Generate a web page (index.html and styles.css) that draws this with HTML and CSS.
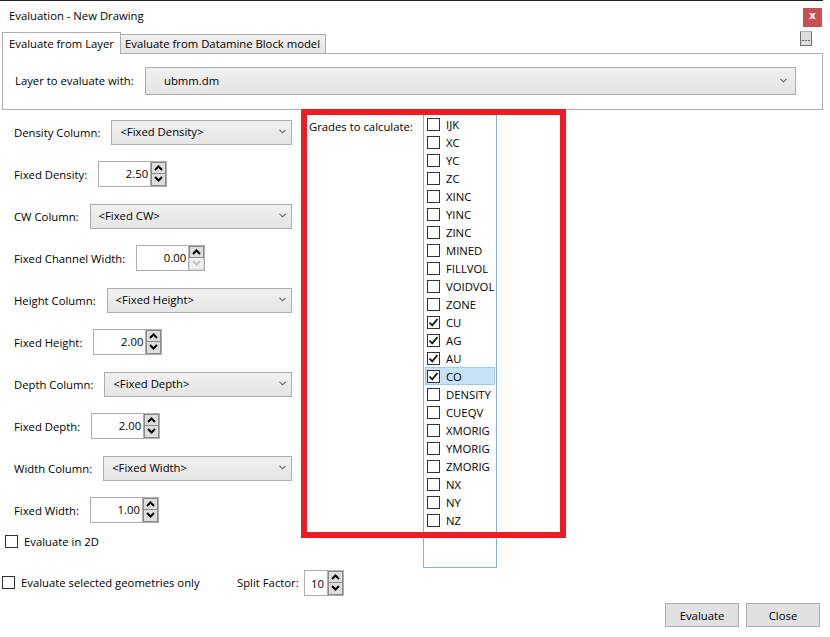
FILE: index.html
```html
<!DOCTYPE html>
<html>
<head>
<meta charset="utf-8">
<link rel="stylesheet" href="styles.css">
</head>
<body>
<div class="window">
  <div class="titlebar">
    <span class="title">Evaluation - New Drawing</span>
    <button class="close-x">x</button>
  </div>
  <div class="tabs-row">
    <div class="tab active">Evaluate from Layer</div>
    <div class="tab">Evaluate from Datamine Block model</div>
    <button class="more"><svg width="8" height="3" viewBox="0 0 8 3"><rect x="0" y="1" width="2" height="1" fill="#7a4a8a"/><rect x="3" y="1" width="2" height="1" fill="#3a6aa0"/><rect x="6" y="1" width="2" height="1" fill="#8a5a3a"/></svg></button>
  </div>
  <div class="tabpanel">
    <span class="panel-label">Layer to evaluate with:</span>
    <div class="combo combo-wide"><span class="combo-text">ubmm.dm</span><svg class="chev" width="7" height="5" viewBox="0 0 7 5"><polyline points="0.5,0.8 3.5,3.8 6.5,0.8" fill="none" stroke="#606060" stroke-width="1.1"/></svg></div>
  </div>
  <div class="main">
    <div class="left">
      <div class="row"><span class="lbl">Density Column:</span><div class="combo"><span class="combo-text">&lt;Fixed Density&gt;</span><svg class="chev" width="7" height="5" viewBox="0 0 7 5"><polyline points="0.5,0.8 3.5,3.8 6.5,0.8" fill="none" stroke="#606060" stroke-width="1.1"/></svg></div></div>
      <div class="row"><span class="lbl">Fixed Density:</span><div class="spin"><div class="spin-field">2.50</div><div class="spin-btns"><span class="spin-btn"><svg width="9" height="6" viewBox="0 0 9 6"><polyline points="1,5 4.5,1.5 8,5" fill="none" stroke="#000" stroke-width="2"/></svg></span><span class="spin-btn"><svg width="9" height="6" viewBox="0 0 9 6"><polyline points="1,1 4.5,4.5 8,1" fill="none" stroke="#000" stroke-width="2"/></svg></span></div></div></div>
      <div class="row"><span class="lbl">CW Column:</span><div class="combo"><span class="combo-text">&lt;Fixed CW&gt;</span><svg class="chev" width="7" height="5" viewBox="0 0 7 5"><polyline points="0.5,0.8 3.5,3.8 6.5,0.8" fill="none" stroke="#606060" stroke-width="1.1"/></svg></div></div>
      <div class="row"><span class="lbl">Fixed Channel Width:</span><div class="spin"><div class="spin-field">0.00</div><div class="spin-btns"><span class="spin-btn"><svg width="9" height="6" viewBox="0 0 9 6"><polyline points="1,5 4.5,1.5 8,5" fill="none" stroke="#000" stroke-width="2"/></svg></span><span class="spin-btn disabled"><svg width="9" height="6" viewBox="0 0 9 6"><polyline points="1,1 4.5,4.5 8,1" fill="none" stroke="#c4c4c4" stroke-width="2"/></svg></span></div></div></div>
      <div class="row"><span class="lbl">Height Column:</span><div class="combo"><span class="combo-text">&lt;Fixed Height&gt;</span><svg class="chev" width="7" height="5" viewBox="0 0 7 5"><polyline points="0.5,0.8 3.5,3.8 6.5,0.8" fill="none" stroke="#606060" stroke-width="1.1"/></svg></div></div>
      <div class="row"><span class="lbl">Fixed Height:</span><div class="spin"><div class="spin-field">2.00</div><div class="spin-btns"><span class="spin-btn"><svg width="9" height="6" viewBox="0 0 9 6"><polyline points="1,5 4.5,1.5 8,5" fill="none" stroke="#000" stroke-width="2"/></svg></span><span class="spin-btn"><svg width="9" height="6" viewBox="0 0 9 6"><polyline points="1,1 4.5,4.5 8,1" fill="none" stroke="#000" stroke-width="2"/></svg></span></div></div></div>
      <div class="row"><span class="lbl">Depth Column:</span><div class="combo"><span class="combo-text">&lt;Fixed Depth&gt;</span><svg class="chev" width="7" height="5" viewBox="0 0 7 5"><polyline points="0.5,0.8 3.5,3.8 6.5,0.8" fill="none" stroke="#606060" stroke-width="1.1"/></svg></div></div>
      <div class="row"><span class="lbl">Fixed Depth:</span><div class="spin"><div class="spin-field">2.00</div><div class="spin-btns"><span class="spin-btn"><svg width="9" height="6" viewBox="0 0 9 6"><polyline points="1,5 4.5,1.5 8,5" fill="none" stroke="#000" stroke-width="2"/></svg></span><span class="spin-btn"><svg width="9" height="6" viewBox="0 0 9 6"><polyline points="1,1 4.5,4.5 8,1" fill="none" stroke="#000" stroke-width="2"/></svg></span></div></div></div>
      <div class="row"><span class="lbl">Width Column:</span><div class="combo"><span class="combo-text">&lt;Fixed Width&gt;</span><svg class="chev" width="7" height="5" viewBox="0 0 7 5"><polyline points="0.5,0.8 3.5,3.8 6.5,0.8" fill="none" stroke="#606060" stroke-width="1.1"/></svg></div></div>
      <div class="row"><span class="lbl">Fixed Width:</span><div class="spin"><div class="spin-field">1.00</div><div class="spin-btns"><span class="spin-btn"><svg width="9" height="6" viewBox="0 0 9 6"><polyline points="1,5 4.5,1.5 8,5" fill="none" stroke="#000" stroke-width="2"/></svg></span><span class="spin-btn"><svg width="9" height="6" viewBox="0 0 9 6"><polyline points="1,1 4.5,4.5 8,1" fill="none" stroke="#000" stroke-width="2"/></svg></span></div></div></div>
      <div class="check-row eval2d"><span class="cb"></span><span>Evaluate in 2D</span></div>
    </div>
    <div class="grades">
      <span class="grades-label">Grades to calculate:</span>
      <div class="listbox">
        <div class="item"><span class="cb"></span><span>IJK</span></div>
        <div class="item"><span class="cb"></span><span>XC</span></div>
        <div class="item"><span class="cb"></span><span>YC</span></div>
        <div class="item"><span class="cb"></span><span>ZC</span></div>
        <div class="item"><span class="cb"></span><span>XINC</span></div>
        <div class="item"><span class="cb"></span><span>YINC</span></div>
        <div class="item"><span class="cb"></span><span>ZINC</span></div>
        <div class="item"><span class="cb"></span><span>MINED</span></div>
        <div class="item"><span class="cb"></span><span>FILLVOL</span></div>
        <div class="item"><span class="cb"></span><span>VOIDVOL</span></div>
        <div class="item"><span class="cb"></span><span>ZONE</span></div>
        <div class="item"><span class="cb"><svg width="11" height="11" viewBox="0 0 11 11"><polyline points="1.5,5.5 4.2,8.3 9.5,2" fill="none" stroke="#111" stroke-width="1.8"/></svg></span><span>CU</span></div>
        <div class="item"><span class="cb"><svg width="11" height="11" viewBox="0 0 11 11"><polyline points="1.5,5.5 4.2,8.3 9.5,2" fill="none" stroke="#111" stroke-width="1.8"/></svg></span><span>AG</span></div>
        <div class="item"><span class="cb"><svg width="11" height="11" viewBox="0 0 11 11"><polyline points="1.5,5.5 4.2,8.3 9.5,2" fill="none" stroke="#111" stroke-width="1.8"/></svg></span><span>AU</span></div>
        <div class="item selected"><span class="cb"><svg width="11" height="11" viewBox="0 0 11 11"><polyline points="1.5,5.5 4.2,8.3 9.5,2" fill="none" stroke="#111" stroke-width="1.8"/></svg></span><span>CO</span></div>
        <div class="item"><span class="cb"></span><span>DENSITY</span></div>
        <div class="item"><span class="cb"></span><span>CUEQV</span></div>
        <div class="item"><span class="cb"></span><span>XMORIG</span></div>
        <div class="item"><span class="cb"></span><span>YMORIG</span></div>
        <div class="item"><span class="cb"></span><span>ZMORIG</span></div>
        <div class="item"><span class="cb"></span><span>NX</span></div>
        <div class="item"><span class="cb"></span><span>NY</span></div>
        <div class="item"><span class="cb"></span><span>NZ</span></div>
      </div>
    </div>
  </div>
  <div class="bottom-row">
    <div class="check-row geo"><span class="cb"></span><span>Evaluate selected geometries only</span></div>
    <span class="split-label">Split Factor:</span>
    <div class="spin spin-small"><div class="spin-field left">10</div><div class="spin-btns"><span class="spin-btn"><svg width="9" height="6" viewBox="0 0 9 6"><polyline points="1,5 4.5,1.5 8,5" fill="none" stroke="#000" stroke-width="2"/></svg></span><span class="spin-btn"><svg width="9" height="6" viewBox="0 0 9 6"><polyline points="1,1 4.5,4.5 8,1" fill="none" stroke="#000" stroke-width="2"/></svg></span></div></div>
  </div>
  <div class="actions">
    <button class="btn">Evaluate</button>
    <button class="btn">Close</button>
  </div>
  <div class="annotation"></div>
</div>
</body>
</html>
```
FILE: styles.css
```css
* { box-sizing: border-box; }
html, body { margin: 0; padding: 0; background: #fff; }
body {
  font-family: "Open Sans", "Noto Sans", sans-serif;
  font-size: 11.3px;
  color: #000;
  width: 830px;
  height: 637px;
  overflow: hidden;
}
.window {
  position: relative;
  width: 823px;
  height: 637px;
  border-top: 1px solid #222;
}
.titlebar {
  height: 30px;
  display: flex;
  align-items: flex-start;
  justify-content: space-between;
  padding-left: 9px;
}
.title { line-height: 30px; }
.close-x {
  margin-top: 7px;
  margin-right: 1px;
  width: 19px;
  height: 19px;
  border: 0;
  padding: 0 0 3px 0;
  background: #c75050;
  color: #fff;
  font-family: "DejaVu Sans", sans-serif;
  font-weight: bold;
  font-size: 10px;
  line-height: 16px;
}
.tabs-row {
  height: 22px;
  display: flex;
  align-items: flex-start;
  padding-left: 2px;
  position: relative;
  z-index: 1;
}
.tab {
  margin-top: 3px;
  height: 19px;
  padding: 0 0 0 4px;
  border: 1px solid #acacac;
  border-bottom: 0;
  background: linear-gradient(#f0f0f0, #e5e5e5);
  line-height: 17px;
  width: 205px;
  white-space: nowrap;
  overflow: hidden;
}
.tab.active {
  margin-top: 1px;
  height: 22px;
  width: 119px;
  background: #fff;
  border-right: 1px solid #acacac;
  padding-left: 6px;
  line-height: 21px;
}
.tab.active + .tab { border-left: 0; }
.more {
  margin-left: auto;
  margin-right: 11px;
  margin-top: 0;
  width: 12px;
  height: 15px;
  padding: 7px 0 0 0;
  border: 1px solid #707070;
  border-top-color: #b0b0b0;
  background: #dddddd;
  display: flex;
  justify-content: center;
  align-items: flex-start;
}
.tabpanel {
  margin-left: 2px;
  height: 57px;
  border: 1px solid #acacac;
  display: flex;
  align-items: flex-start;
  padding: 13px 26px 0 12px;
}
.panel-label { line-height: 28px; width: 130px; flex: none; }
.combo {
  flex: 1;
  height: 25px;
  border: 1px solid #acacac;
  background: linear-gradient(#f0f0f0, #e5e5e5);
  display: flex;
  align-items: center;
  justify-content: space-between;
  padding: 0 5px 2px 8px;
}
.combo-wide { height: 28px; padding-left: 18px; padding-right: 8px; }
.chev { flex: none; margin-top: 1px; }
.main {
  display: flex;
  align-items: flex-start;
  height: 458px;
}
.left {
  width: 292px;
  flex: none;
  padding-top: 1px;
}
.row {
  height: 42px;
  display: flex;
  align-items: center;
  gap: 11px;
  padding-left: 14px;
}
.lbl { flex: none; }
.spin {
  display: flex;
  height: 26px;
  margin-top: -1px;
}
.spin-field {
  width: 52px;
  border: 1px solid #abadb3;
  border-right: 0;
  text-align: right;
  padding-right: 2px;
  line-height: 23px;
  background: #fff;
}
.spin-field.left { text-align: left; padding-left: 6px; width: 23px; }
.spin-btns {
  width: 17px;
  display: flex;
  flex-direction: column;
  border: 1px solid #abadb3;
}
.spin-btn {
  flex: 1;
  display: flex;
  align-items: center;
  justify-content: center;
  background: #dddddd;
  border: 1px solid #8a8a8a;
}
.spin-btn + .spin-btn { border-top: 0; }
.spin-btn.disabled { background: #f0f0f0; border-color: #d5d5d5; }
.cb {
  width: 13px;
  height: 13px;
  flex: none;
  border: 1px solid #333;
  background: #fff;
  display: flex;
  align-items: center;
  justify-content: center;
}
.check-row { display: flex; align-items: center; gap: 6px; white-space: nowrap; }
.eval2d { padding-left: 5px; margin-top: 4px; height: 13px; }
.grades {
  display: flex;
  align-items: flex-start;
  padding-left: 17px;
}
.grades-label { width: 114px; flex: none; padding-top: 9px; }
.listbox {
  margin-top: 4px;
  width: 74px;
  height: 454px;
  border: 1px solid #7fb2e6;
  padding: 0 1px;
}
.item {
  height: 18px;
  display: flex;
  align-items: center;
  gap: 6px;
  padding-left: 1px;
  border: 1px solid transparent;
  white-space: nowrap;
}
.item.selected { background: #c4e3f6; border-color: #9acbee; }
.bottom-row {
  display: flex;
  align-items: center;
  height: 25px;
  margin-top: 2px;
}
.geo { width: 237px; padding-left: 2px; }
.split-label { width: 67px; }
.spin-small { margin-top: 0; }
.actions {
  display: flex;
  justify-content: flex-end;
  gap: 7px;
  margin-top: 8px;
  padding-right: 3px;
}
.btn {
  width: 74px;
  height: 24px;
  border: 1px solid #adadad;
  background: #e1e1e1;
  font-family: inherit;
  font-size: inherit;
  color: #000;
  padding: 0;
}
.annotation {
  position: absolute;
  left: 301px;
  top: 108px;
  width: 265px;
  height: 429px;
  border: 6px solid #ed1c24;
  pointer-events: none;
}
```
